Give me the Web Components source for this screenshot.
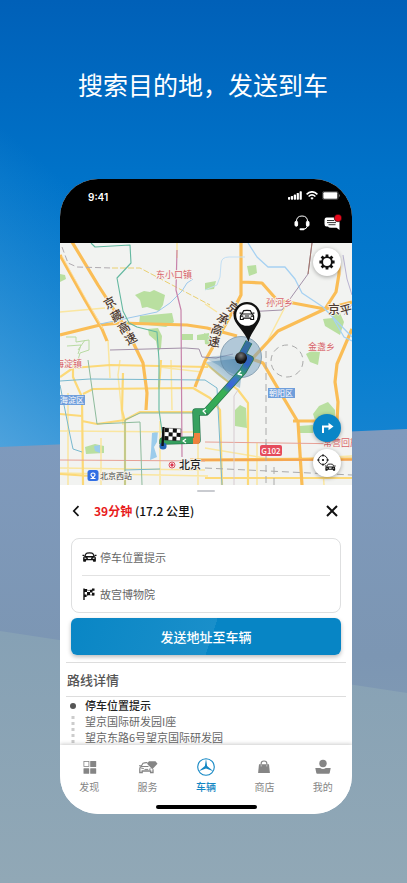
<!DOCTYPE html>
<html lang="zh-CN">
<head>
<meta charset="utf-8">
<meta name="viewport" content="width=device-width, initial-scale=1">
<title>搜索目的地，发送到车</title>
<style>
html{height:100%}
body{margin:0;min-height:100%;font-family:"Noto Sans CJK SC",sans-serif;background:#8ca4b7}
</style>
</head>
<body>
<promo-poster>
  <span slot="headline">搜索目的地，发送到车</span>
  <phone-shell>
    <status-bar slot="top" time="9:41"></status-bar>
    <route-map></route-map>
    <route-sheet>
      <span slot="time">39分钟</span>
      <span slot="distance">(17.2 公里)</span>
    </route-sheet>
    <tab-bar slot="bottom">
      <tab-item icon="grid">发现</tab-item>
      <tab-item icon="service">服务</tab-item>
      <tab-item icon="star" active>车辆</tab-item>
      <tab-item icon="bag">商店</tab-item>
      <tab-item icon="user">我的</tab-item>
    </tab-bar>
  </phone-shell>
</promo-poster>
<script>
const define = (name, html) => customElements.define(name, class extends HTMLElement {
  constructor() {
    super();
    this.attachShadow({ mode: 'open' }).innerHTML = typeof html === 'function' ? html(this) : html;
  }
});

const carFront = `
  <path d="M4.6 6.3 6.4 2.6Q6.8 1.6 8 1.5Q12 1 16 1.5Q17.2 1.6 17.6 2.6L19.4 6.3" fill="none" stroke="currentColor" stroke-width="1.9"/>
  <path d="M.8 5.2h3M20.200 5.2h3" stroke="currentColor" stroke-width="2"/>
  <path d="M4.5 6h15q2.700 1 2.700 3v5.200q0 1-1 1h-2.700q-1 0-1-1v-1.200H6.500v1.200q0 1-1 1H2.800q-1 0-1-1V9q0-2 2.700-3Z" fill="currentColor"/>
  <path d="M4 8.6l3 .8-.3 1.2H4Zm16 0-3 .8.3 1.2H20ZM8.7 8.4h6.6l-1 2.4H9.7Z" fill="#fff"/>`;

/* Page background and headline */
define('promo-poster', `
<style>
:host{display:block;position:relative;min-height:883px;box-sizing:border-box;padding:60px 55px 69px 60px;overflow:hidden}
.bg{position:absolute;inset:0;width:100%;height:100%}
h1{position:relative;margin:0 -50px 0 -56px;padding-bottom:71px;font-size:25px;line-height:48px;font-weight:400;color:#fff;text-align:center;white-space:nowrap}
::slotted(phone-shell){position:relative}
</style>
<svg class="bg" viewBox="0 0 407 883" preserveAspectRatio="none" aria-hidden="true">
  <defs>
    <linearGradient id="sky" x2="0" y2="1"><stop offset="0" stop-color="#0060b8"/><stop offset=".4" stop-color="#0073c9"/><stop offset=".8" stop-color="#087ecf"/><stop offset="1" stop-color="#1684d1"/></linearGradient>
    <linearGradient id="glow" x1="0" y1="1" x2=".35" y2=".55"><stop offset="0" stop-color="#58a8df" stop-opacity=".85"/><stop offset="1" stop-color="#3a98d8" stop-opacity="0"/></linearGradient>
    <linearGradient id="hill" x2="0" y2="1"><stop offset="0" stop-color="#7f9abd"/><stop offset=".5" stop-color="#7c96b3"/><stop offset="1" stop-color="#8aa2b5"/></linearGradient>
    <linearGradient id="near" x2="0" y2="1"><stop offset="0" stop-color="#86a1b5"/><stop offset="1" stop-color="#91a8b6"/></linearGradient>
  </defs>
  <rect width="407" height="450" fill="url(#sky)"/>
  <rect width="407" height="450" fill="url(#glow)"/>
  <path d="M0 447 407 429V883H0Z" fill="url(#hill)"/>
  <path d="M0 631 407 693V883H0Z" fill="url(#near)"/>
</svg>
<h1><slot name="headline"></slot></h1>
<slot></slot>`);

define('phone-shell', `
<style>
:host{display:flex;flex-direction:column;border-radius:38px;overflow:hidden;background:#fff}
</style>
<slot name="top"></slot><slot></slot><slot name="bottom"></slot>`);

define('status-bar', el => `
<style>
:host{display:block;background:#000;color:#fff;padding:10px 10px 3px 28px}
.row{display:flex;align-items:center;justify-content:space-between}
time{font:600 10px/16px Inter,sans-serif}
.sys{display:flex;gap:4px;align-items:center;padding-right:2px;height:12px;margin-bottom:4px}
.acts{justify-content:flex-end;gap:13px;height:35px}
svg{display:block}
button{all:unset;display:block;cursor:pointer}
</style>
<div class="row"><time>${el.getAttribute('time')}</time>
<div class="sys">
  <svg width="14" height="9" viewBox="0 0 14 9" fill="#fff"><rect y="6" width="2.2" height="2.7" rx=".6"/><rect x="2.9" y="5" width="2.2" height="3.7" rx=".6"/><rect x="5.8" y="3.6" width="2.2" height="5.1" rx=".6"/><rect x="8.7" y="2" width="2.2" height="6.7" rx=".6"/><rect x="11.6" y=".3" width="2.2" height="8.4" rx=".6"/></svg>
  <svg width="12" height="9" viewBox="0 0 12 9" fill="none" stroke="#fff"><path d="M.6 3.4Q6-1.8 11.4 3.4" stroke-width="1.6"/><path d="M2.6 5.5Q6 2.3 9.4 5.5" stroke-width="1.5"/><path d="M4.3 7 6 8.8 7.7 7Q6 5.7 4.3 7Z" fill="#fff" stroke="none"/></svg>
  <svg width="18" height="9" viewBox="0 0 18 9"><rect x=".4" y=".4" width="15.8" height="8.2" rx="2" fill="none" stroke="#555" stroke-width=".8"/><rect x="1.3" y="1.3" width="14" height="6.4" rx="1" fill="#fff"/><path d="M17 3v3q.9-.5.9-1.5T17 3Z" fill="#777"/></svg>
</div></div>
<div class="row acts">
  <button aria-label="客服"><svg width="16" height="16" viewBox="0 0 16 16" fill="none" stroke="#fff"><path d="M2.4 6.5Q2.6 1 8 1t5.6 5.5M13.4 11q-.6 3-4 3.3" stroke-width="1"/><rect x="1" y="6.2" width="2.6" height="5" rx="1.2" fill="#fff"/><rect x="12.4" y="6.2" width="2.6" height="5" rx="1.2" fill="#fff"/><path d="M6.5 14.2h3" stroke-width="2" stroke-linecap="round"/></svg></button>
  <button aria-label="消息"><svg width="19" height="18" viewBox="0 0 19 18"><path d="M3.5 3.5h10q3 0 3 3V16l-3-2.2H8Q5.400 13.800 5 12.500H3.500Q1.500 12.500 1.500 10V6.500Q1.500 3.500 3.500 3.500Z" fill="#fff"/><path d="M4 6.500h7M4 8.600h9M5.500 10.700h7" stroke="#222" stroke-width=".9"/><circle cx="15" cy="4" r="3.800" fill="#e6091c" stroke="#000" stroke-width=".6"/></svg></button>
</div>`);

define('round-button', `
<style>
:host{display:block;width:28px;height:28px}
button{all:unset;box-sizing:border-box;display:flex;align-items:center;justify-content:center;width:100%;height:100%;border-radius:50%;background:var(--fill,#fff);color:var(--ink,#111);box-shadow:0 1px 4px #0005;cursor:pointer}
</style>
<button><slot></slot></button>`);

define('route-map', `
<style>
:host{display:block;position:relative;background:#f2f3f1;overflow:hidden}
.map{display:block;width:100%;height:auto}
.tools{position:absolute;right:11px;top:5px;bottom:8px;display:flex;flex-direction:column;gap:7px}
.tools > :first-child{margin-bottom:auto}
.blue{--fill:#0a86c7;--ink:#fff}
text{font-family:"Noto Sans CJK SC",sans-serif}
.halo{paint-order:stroke;stroke:#f6f4ee;stroke-width:1.500px}
</style>
<svg class="map" viewBox="0 0 292 242" role="img" aria-label="路线地图">
<defs>
  <linearGradient id="beam" x1="1" y1="0" x2="0" y2="1"><stop offset="0" stop-color="#2b6e9c" stop-opacity=".75"/><stop offset="1" stop-color="#5c9cc4" stop-opacity="0"/></linearGradient>
  <radialGradient id="ball" cx=".5" cy=".3"><stop offset="0" stop-color="#777"/><stop offset="1" stop-color="#111"/></radialGradient>
  <linearGradient id="rt" gradientUnits="userSpaceOnUse" x1="146" y1="169" x2="190" y2="105"><stop offset="0" stop-color="#32a65c"/><stop offset=".35" stop-color="#39b053"/><stop offset=".45" stop-color="#3b63dc"/><stop offset=".57" stop-color="#3b78c5"/><stop offset=".66" stop-color="#35a265"/><stop offset=".8" stop-color="#2e61c1"/><stop offset="1" stop-color="#356d9d"/></linearGradient>
</defs>
<rect width="292" height="242" fill="#f2f3f1"/>
<g fill="#b9dfa0">
  <path d="M75 52l9-4 6 1 4-2 11 5-2 10-4 6-12-4-5 1-2-8Z"/><path d="M80 73l32-3 2 9-8 5-27-3Z"/><path d="M88 86l10-1 4 8-1 12-3 4-2-11-7-6Z"/>
  <path d="M122 91h11v6h-11ZM137 92l12-2v7h-12ZM145 40l11-2-2 8-9 1ZM187 23l9-1 1 8-8 3ZM0 31l5 1 1 4-6 3Z"/>
  <path d="M144 90l11 5-2 8-8-2ZM263 76l9-1 2-6 6 1 4 9-4 13-15-9ZM246 111l7-4 7 2-2 13-8-3Z"/>
  <path d="M25 204l10-3 9 2v7l-18 1ZM175 167l5-5 6 3 1 20-12-2ZM253 171l6-8 9-4 7 8v10h-20ZM239 183l14-1v8h-13Z"/>
</g>
<g fill="#9bccec"><path d="M92 190l6-2-1 11-3 5 3 10-7 3 1-9ZM34 203l6-1v8l-5-2Z"/></g>
<g fill="none" stroke-linejoin="round">
  <g stroke="#fae6a0" stroke-width="1.500">
    <path d="M117 0V15M0 69l45-4M48 97l2 38M60 117l-2 15 5 50M208 97l17-33M225 64l-14-8M145 61l12 8M111 117l1 50M99 124l43 5M0 188l133 1M100 242V178M0 230l148 3M41 242V195M8 242V150M138 197v45M197 242V200M145 205l72 12 75-4M264 242l-2-32M0 225l145 2"/>
  </g>
  <g stroke="#fcd978" stroke-width="2.200">
    <path d="M0 134l13-9 37-3 98 2M13 117v17l9 20 1 88M22 178l15 3 28-4 15-8 53 0M63 130l-1 37 3 12v63M23 151l10-5 100-1 17 10 10 12 2 75M145 120l33 27 10 13v82M145 235h147M0 171l22 2M101 117l-2 28M0 231l30 2"/>
  </g>
  <g stroke="#fabd56" stroke-width="3.200">
    <path d="M12-1l26 43 29 45 16 33 4 30-1 17M0 12l25 45 17 29 5 12M0 92l40-10 20-2 67 2 20 3 30 8M181 0v52l-13 25-23 41-10 26M181 39l21 1 15 17 48 9 27-7M279 20v11l-3 18-11 17-47 22-26 28 11 4 20 34 15 25 4 63M292 86l-15 35-2 18 3 20-1 19M233 178h26M130 217l162-1"/>
  </g>
  <path d="M2 13l24 43 17 30" stroke="#fff3ca" stroke-width=".6"/>
  <path d="M135 217h157" stroke="#ef9151" stroke-width="1"/>
  <path d="M0 217l145 1M145 199l147 2" stroke="#e7a095"/>
  <path d="M2 4l6 16 9 4 35 1" stroke="#b0abb0" stroke-dasharray="6 3"/>
  <path d="M52 25l28 0 70 37" stroke="#ead070" stroke-dasharray="6 2"/>
  <path d="M188 0l9 14 11 10h17l10 12 7 14 21 14 29 30M270 70l14 24 8 4" stroke="#a6d1f2" stroke-width="1.300"/>
  <path d="M145 47l12-5 3-8 1-13q0-7 8-7h16" stroke="#c3dff4"/>
  <path d="M40 81l57-12 13-9 12-12 5-8 6-4" stroke="#9cc8ec"/>
  <path d="M31 0l4 4 35-2 1 18-14 15 6 33 6 12 8 4 20 5 2 28 0 50 4 28" stroke="#63b8a0" stroke-width="1.100"/>
  <path d="M28 117l9 64 43-2 2 63M65 242v-65l15-7h55" stroke="#8dbb9c"/>
  <path d="M0 138l30-2 115 1 12 8 5 97M0 142l10 50 3 14 9 3M65 227l35-1" stroke="#79b9cf"/>
  <path d="M117 7l-1 40 5 20 1 147" stroke="#c782aa" stroke-width="1.200"/>
  <path d="M50 107l75-2 14 1 3 8 14 1 17-4M185 69l37-2 26-36 4-31" stroke="#a391a9"/>
  <path d="M248 31l4-31" stroke="#a4776b"/>
  <path d="M178 147l-4 6v89" stroke="#d6cbd1"/>
  <path d="M283 12l4 24 5 16M293 60l-9 12" stroke="#b9b3d1"/>
  <path d="M206 108v97M145 225l147 7M206 200v42M214 242v-18" stroke="#aaa" stroke-dasharray="7 4"/>
  <circle cx="227" cy="118" r="16" stroke="#aaa" stroke-dasharray="6 4"/>
  <g stroke="#b8dba2" stroke-width="1"><path d="M6 94l10 0v5l13-2v10l-9 3-2 7M7 103l14-1-3 9M25 97l-7 10"/></g>
</g>
<g fill="#d6646d" font-size="9" font-weight="400" class="halo">
  <text x="96" y="35">东小口镇</text><text x="206" y="63">孙河乡</text><text x="248" y="107">金盏乡</text><text x="-5" y="124">海淀镇</text><text x="263" y="203">常营回族</text>
</g>
<g fill="#4e3b31" font-size="12" font-weight="500" text-anchor="middle" class="halo">
  <text transform="translate(50 60) rotate(-30)" y="4">京</text><text transform="translate(57 73) rotate(-30)" y="4">藏</text><text transform="translate(64 85) rotate(-30)" y="4">高</text><text transform="translate(71 96) rotate(-30)" y="4">速</text>
  <text transform="translate(173 65) rotate(38)" y="4">京</text><text transform="translate(163 76) rotate(30)" y="4">承</text><text transform="translate(157 87) rotate(18)" y="4">高</text><text transform="translate(154 99) rotate(8)" y="4">速</text>
  <text x="274" y="71">京</text><text transform="translate(286 67) rotate(-15)" y="4">平</text>
</g>
<rect x="-3" y="152" width="28" height="10" fill="#6f9edb"/><rect x="208" y="145" width="27" height="10" fill="#6f9edb"/>
<g fill="#fff" font-size="8"><text x="0" y="160">海淀区</text><text x="209" y="153">朝阳区</text></g>
<rect x="200" y="202" width="22" height="11" rx="2" fill="#e54b5b"/><text x="211" y="211" font-size="8" text-anchor="middle" fill="#fff" font-weight="500">G102</text>
<path d="M183 115 146 119Q157 136 180 145Z" fill="url(#beam)"/>
<circle cx="181" cy="114" r="20.500" fill="#7ba4c2" fill-opacity=".55" stroke="#7994a8" stroke-width=".8"/>
<path d="M145 115Q160 110 181 115V134Q165 128 158 122Z" fill="#286d9a" opacity=".25"/>
<g fill="none" stroke-linejoin="round">
  <path d="M103 201v-3l34-1-1-28h10l37-41 7-12-8-4 7-13" stroke="#28784d" stroke-width="7.500"/>
  <path d="M103 201v-3l34-1-1-28h10" stroke="#36a15f" stroke-width="6"/>
  <path d="M146 169l37-41 7-12-8-4 7-13" stroke="url(#rt)" stroke-width="6"/>
  <path d="M137 190v8h-4" stroke="#ee813e" stroke-width="6"/>
  <path d="M126 196l-3 2 3 2M146 166l-3 2 3 3M181 128l-3 3 4 1" stroke="#fff" stroke-width="1.300"/>
</g>
<circle cx="181" cy="115" r="6" fill="url(#ball)"/>
<circle cx="103" cy="203" r="3.600" fill="#2668b9"/>
<path d="M187 59a13.500 13.500 0 0 1 13.500 13.500C200.500 81 191 88 188.500 99 185 88 173.500 81 173.500 72.500A13.500 13.500 0 0 1 187 59Z" fill="#111"/>
<circle cx="187" cy="72" r="10.800" fill="#fff"/>
<g transform="translate(179 66.500)" fill="none" stroke="#111" stroke-width="1.200"><path d="M3 4.500 4.600 1.200Q8 .5 11.400 1.200L13 4.500M3 4.500h10q1.600.7 1.600 2.300V10h-2.800V8.700H4.200V10H1.400V6.800Q1.400 5.200 3 4.500ZM.6 3.700h2M13.400 3.700h2M2 6.700h2.300M11.700 6.700H14M5.800 6.500h4.400"/></g>
<g transform="rotate(3 104 184)">
  <path d="M103.500 184v19" stroke="#111" stroke-width="2.400"/><path d="M105 185h16v12h-16Z" fill="#fff" stroke="#333" stroke-width=".5"/>
  <path d="M105 185h4v4h-4Zm8 0h4v4h-4Zm-4 4h4v4h-4Zm8 0h4v4h-4Zm-12 4h4v4h-4Zm8 0h4v4h-4Z" fill="#111"/>
</g>
<circle cx="112" cy="222" r="3" fill="#fff" stroke="#d95460"/><circle cx="112" cy="222" r="1.700" fill="#d9344c"/>
<text class="halo" x="119" y="226" font-size="11" font-weight="500" fill="#222">北京</text>
<rect x="27.500" y="227" width="11" height="11" rx="2.500" fill="#326fe4"/><path d="M30.500 235.500h2V234Q30.500 232.700 31 231.200 33 228.800 35 231.200 35.500 232.700 33.500 234v1.500h2" fill="none" stroke="#fff" stroke-width="1.100"/>
<text class="halo" x="40" y="236" font-size="8" fill="#444">北京西站</text>
</svg>
<div class="tools">
  <round-button aria-label="设置"><svg width="18" height="18" viewBox="0 0 18 18"><path d="M9 1.400V4M9 14v2.600M1.400 9H4M14 9h2.600M3.600 3.600l2 2M12.400 12.400l2 2M3.600 14.400l2-2M12.400 5.600l2-2" stroke="#111" stroke-width="2.800"/><circle cx="9" cy="9" r="4.900" fill="#fff" stroke="#111" stroke-width="1.900"/></svg></round-button>
  <round-button class="blue" aria-label="导航"><svg width="14" height="14" viewBox="0 0 14 14" fill="none" stroke="currentColor" stroke-width="2"><path d="M3 12V5.500h7"/><path d="M8.500 1.700 13.500 5.500 8.500 9.300Z" fill="currentColor" stroke="none"/></svg></round-button>
  <round-button aria-label="定位车辆"><svg width="20" height="18" viewBox="0 0 20 18"><circle cx="6" cy="6" r="4.500" fill="none" stroke="#111" stroke-width=".9"/><circle cx="6" cy="6" r="1.100"/><path d="M6 0v2.500M6 9.500V12M0 6h2.500M9.500 6H12" stroke="#111" stroke-width=".9"/><g transform="translate(7.500 9.500) scale(.48)" color="#111">${carFront}</g></svg></round-button>
</div>`);

define('place-field', el => `
<style>
:host{display:block}
label{display:flex;align-items:center;gap:3px;height:36px}
input{all:unset;flex:1;min-width:0;font:400 11px/16px "Noto Sans CJK SC",sans-serif;color:#666}
</style>
<label><slot></slot><input aria-label="${el.getAttribute('label')}" value="${el.getAttribute('value')}"></label>`);

define('route-sheet', `
<style>
:host{display:block;position:relative;background:#fff;border-radius:6px 6px 0 0;padding:5px 11px 0}
.grip{width:18px;height:2px;border-radius:1px;background:#c9cbd0;margin:0 auto}
header{display:flex;align-items:center;height:38px;padding-right:3px}
button{all:unset;cursor:pointer;display:block}
header svg{display:block}
h2{margin:0;padding-left:13px;flex:1;font-size:12px;line-height:18px;font-weight:700;color:#111;white-space:nowrap}
h2 slot[name=time]{color:#e81c1c}
h2 .d{font-weight:500}
.card{margin-top:8px;border:1px solid #dedfe0;border-radius:8px;padding:0 10px}
.card svg{display:block;flex:none}
.card place-field+place-field{border-top:1px solid #e2e2e2}
.send{box-sizing:border-box;width:100%;height:37px;margin-top:5px;border-radius:6px;background:linear-gradient(108deg,#0986c5,#1a8fca 52%,#0785c5 52%,#0785c5);color:#fff;text-align:center;font-size:13px;line-height:36px;font-weight:500;box-shadow:0 2px 4px #0004}
section{margin:7px -5px 0;border-top:1px solid #ddd}
h3{margin:0;padding-left:1px;font-size:13px;line-height:33px;font-weight:500;color:#555;border-bottom:1px solid #ddd}
ol{list-style:none;margin:0;padding:0 0 0 19px}
li{position:relative;font-size:11px;line-height:16px;color:#666}
li strong{display:block;font-weight:500;color:#222}
li span{display:block}
li svg{position:absolute;left:-16px;top:0}
</style>
<div class="grip"></div>
<header>
  <button aria-label="返回"><svg width="10" height="12" viewBox="0 0 10 12" fill="none" stroke="#111" stroke-width="1.700"><path d="M7.500 1.200 2.800 6l4.700 4.800"/></svg></button>
  <h2><slot name="time"></slot> <span class="d"><slot name="distance"></slot></span></h2>
  <button aria-label="关闭"><svg width="12" height="12" viewBox="0 0 12 12" stroke="#111" stroke-width="2"><path d="M1 1l10 10M11 1 1 11"/></svg></button>
</header>
<div class="card">
  <place-field label="起点" value="停车位置提示"><svg width="15" height="11" viewBox="0 0 24 17" color="#111">${carFront}</svg></place-field>
  <place-field label="终点" value="故宫博物院"><svg width="15" height="14" viewBox="0 0 15 14"><path d="M2 1.500V13" stroke="#111" stroke-width="1.400"/><path d="M2 2h3v3H2ZM5 5h3v3H5ZM2 7.500h2.500v2.500H2ZM8 3h2.500v2.500H8ZM10 1.500h2.500v2.300H10ZM10 5.800h2.500V8.500H10Z" fill="#111"/><path d="M3 2.500q3 2 9 0M3 9.500q3-2.500 9-1.500" fill="none" stroke="#111" stroke-width=".6"/></svg></place-field>
</div>
<button class="send">发送地址至车辆</button>
<section>
  <h3>路线详情</h3>
  <ol><li><svg width="8" height="48" viewBox="0 0 8 48"><circle cx="4" cy="9" r="3" fill="#555"/><g fill="#ccc"><rect x="2.500" y="19" width="3" height="3"/><rect x="2.500" y="25" width="3" height="3"/><rect x="2.500" y="31" width="3" height="3"/><rect x="2.500" y="37" width="3" height="3"/><rect x="2.500" y="43" width="3" height="3"/></g></svg>
  <strong>停车位置提示</strong><span>望京国际研发园I座</span><span>望京东路6号望京国际研发园</span></li></ol>
</section>`);

define('tab-bar', `
<style>
:host{display:block;position:relative;background:#fff;box-shadow:0 -1px 4px #0003;padding-bottom:5px}
nav{display:grid;grid-template-columns:repeat(5,1fr);height:60px}
.home{width:101px;height:4px;border-radius:2px;background:#000;margin:0 auto}
</style>
<nav><slot></slot></nav><div class="home"></div>`);

const tabIcons = {
  grid: '<rect x="4.900" y="4.400" width="5" height="5" fill="none" stroke="currentColor" stroke-width=".8"/><rect x="11.200" y="4" width="6" height="6" rx=".5"/><rect x="4.500" y="11.200" width="5.700" height="5.500" rx=".5"/><rect x="11.200" y="11.200" width="6" height="5.500" rx=".5"/>',
  service: '<path d="M11 4.200h6.500l2 2.600-5.200 5.400L9 6.800Z"/><path d="M3.200 9.300 5 6.200q2-.7 4.500-.5M1 8.800h2.400M3 9.500h7.500" fill="none" stroke="currentColor" stroke-width="1.100"/><path d="M3 9.500Q1.800 10.200 1.800 12v3.500h2.400V14h8.400v1.500H15v-3.300" fill="none" stroke="currentColor" stroke-width="1.300"/><path d="M3 11l2.800.6M12.800 11.900l-2 .4M6.500 12.400h3.500" stroke="currentColor" stroke-width="1"/>',
  star: '<circle cx="10" cy="10" r="8.300" fill="none" stroke="currentColor" stroke-width="1.100"/><path d="M10 1.700 11.100 9 17.400 14.300 10 11.500 2.600 14.300 8.900 9Z"/>',
  bag: '<path d="M5 7.200h10l.9 8.800H4.100Z"/><path d="M7.200 9V6.300q0-2.300 2.800-2.300t2.800 2.300V9" fill="none" stroke="currentColor" stroke-width="1.200"/><path d="M7.200 7.500v2M12.800 7.500v2" stroke="#ddd" stroke-width=".7"/>',
  user: '<circle cx="10" cy="6.500" r="3.700"/><path d="M2.300 11h4.900q2.800 2 5.600 0h4.900l-1 5q0 .8-1 .8H4.300q-1 0-1-.8Z"/>'
};
define('tab-item', el => `
<style>
:host{display:block}
a{display:flex;flex-direction:column;align-items:center;gap:2px;padding-top:12px;color:#858585;text-decoration:none;font-size:10px;line-height:16px}
:host([active]) a{color:#1387c4;font-weight:500}
svg{display:block;fill:currentColor}
</style>
<a href="#"${el.hasAttribute('active') ? ' aria-current="page"' : ''}><svg width="20" height="20" viewBox="0 0 20 20" aria-hidden="true">${tabIcons[el.getAttribute('icon')]}</svg><slot></slot></a>`);
</script>
</body>
</html>
